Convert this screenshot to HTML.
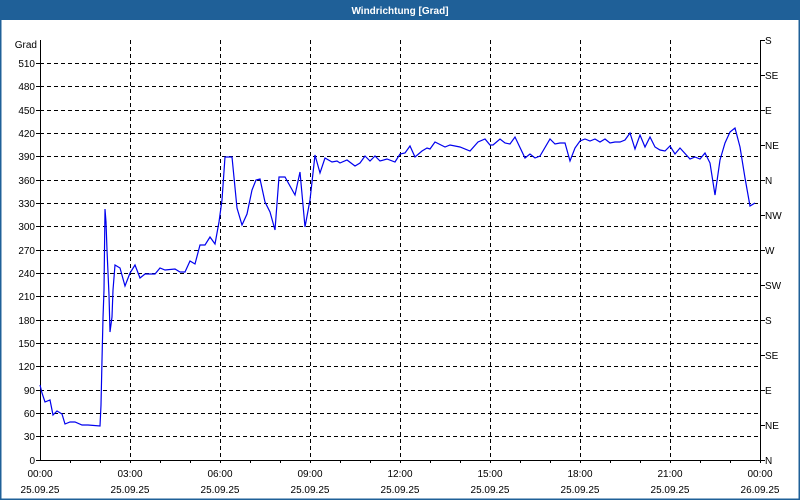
<!DOCTYPE html>
<html><head><meta charset="utf-8"><style>
html,body{margin:0;padding:0;background:#fff;}
svg{display:block;font-family:"Liberation Sans",sans-serif;font-size:10px;}
</style></head><body>
<svg width="800" height="500" xmlns="http://www.w3.org/2000/svg">
<rect x="0" y="0" width="800" height="500" fill="#fff"/>
<rect x="0.5" y="0.5" width="799" height="499" fill="none" stroke="#1f6098" stroke-width="2"/>
<rect x="0" y="0" width="800" height="20" fill="#1f6098"/>
<text x="400" y="14" fill="#fff" font-weight="bold" text-anchor="middle">Windrichtung [Grad]</text>
<g stroke="#000" stroke-width="1" stroke-dasharray="4,3" fill="none">
<path d="M40 63.5H760M40 86.5H760M40 110.5H760M40 133.5H760M40 156.5H760M40 180.5H760M40 203.5H760M40 226.5H760M40 250.5H760M40 273.5H760M40 296.5H760M40 320.5H760M40 343.5H760M40 366.5H760M40 390.5H760M40 413.5H760M40 436.5H760"/>
<path d="M130.5 40V460M220.5 40V460M310.5 40V460M400.5 40V460M490.5 40V460M580.5 40V460M670.5 40V460"/>
</g>
<g stroke="#000" stroke-width="1" fill="none">
<path d="M40.5 40V460.5H760.5V40"/>
<path d="M70.5 460v3M100.5 460v3M130.5 460v3M160.5 460v3M190.5 460v3M220.5 460v3M250.5 460v3M280.5 460v3M310.5 460v3M340.5 460v3M370.5 460v3M400.5 460v3M430.5 460v3M460.5 460v3M490.5 460v3M520.5 460v3M550.5 460v3M580.5 460v3M610.5 460v3M640.5 460v3M670.5 460v3M700.5 460v3M730.5 460v3M760.5 460v3"/>
<path d="M760 40.5h5M760 75.5h5M760 110.5h5M760 145.5h5M760 180.5h5M760 215.5h5M760 250.5h5M760 285.5h5M760 320.5h5M760 355.5h5M760 390.5h5M760 425.5h5M760 460.5h5"/>
<path d="M36 63.5h4M36 86.5h4M36 110.5h4M36 133.5h4M36 156.5h4M36 180.5h4M36 203.5h4M36 226.5h4M36 250.5h4M36 273.5h4M36 296.5h4M36 320.5h4M36 343.5h4M36 366.5h4M36 390.5h4M36 413.5h4M36 436.5h4M36 460.5h4"/>
</g>
<g fill="#000" text-anchor="end">
<text x="37" y="48">Grad</text>
<text x="35" y="67">510</text><text x="35" y="90">480</text><text x="35" y="114">450</text><text x="35" y="137">420</text><text x="35" y="160">390</text><text x="35" y="184">360</text><text x="35" y="207">330</text><text x="35" y="230">300</text><text x="35" y="254">270</text><text x="35" y="277">240</text><text x="35" y="300">210</text><text x="35" y="324">180</text><text x="35" y="347">150</text><text x="35" y="370">120</text><text x="35" y="394">90</text><text x="35" y="417">60</text><text x="35" y="440">30</text><text x="35" y="464">0</text>
</g>
<g fill="#000">
<text x="765" y="44">S</text><text x="765" y="79">SE</text><text x="765" y="114">E</text><text x="765" y="149">NE</text><text x="765" y="184">N</text><text x="765" y="219">NW</text><text x="765" y="254">W</text><text x="765" y="289">SW</text><text x="765" y="324">S</text><text x="765" y="359">SE</text><text x="765" y="394">E</text><text x="765" y="429">NE</text><text x="765" y="464">N</text>
</g>
<g fill="#000" text-anchor="middle">
<text x="40" y="477">00:00</text><text x="130" y="477">03:00</text><text x="220" y="477">06:00</text><text x="310" y="477">09:00</text><text x="400" y="477">12:00</text><text x="490" y="477">15:00</text><text x="580" y="477">18:00</text><text x="670" y="477">21:00</text><text x="760" y="477">00:00</text>
<text x="40" y="493">25.09.25</text><text x="130" y="493">25.09.25</text><text x="220" y="493">25.09.25</text><text x="310" y="493">25.09.25</text><text x="400" y="493">25.09.25</text><text x="490" y="493">25.09.25</text><text x="580" y="493">25.09.25</text><text x="670" y="493">25.09.25</text><text x="760" y="493">26.09.25</text>
</g>
<polyline fill="none" stroke="#0000ee" stroke-width="1.2" points="40,385 42,393 45,402 50,400 53,415 57,411 62,414 65,424 70,422 75,422 82,425 88,425 100,426 101,405 102,360 103,318 104,290 105,209 106,222 107,250 109,295 110,332 112,317 113,290 115,265 120,268 125,286 130,273 135,265 140,278 145,274 155,274 160,268 165,270 175,269 180,272 185,272 190,261 195,264 200,245 205,245 210,237 215,244 219,222 222,200 225,157 232,157 237,208 242,225 247,214 252,190 256,180 260,179 265,202 270,212 275,230 279,177 285,177 295,195 300,172 305,227 310,200 315,155 320,173 325,158 332,162 337,161 340,163 347,160 355,166 360,163 365,156 370,161 375,156 380,161 387,159 395,162 400,154 405,153 410,146 415,157 422,151 427,148 430,149 435,142 445,147 450,145 460,147 470,151 478,142 485,139 490,145 493,145 500,139 505,143 510,144 515,137 525,158 530,154 535,158 540,156 550,139 555,144 560,143 565,143 570,161 575,148 580,141 585,139 590,141 595,139 600,142 605,139 610,143 615,142 620,142 625,140 630,133 635,149 640,135 645,147 650,137 655,147 660,150 665,151 670,146 675,154 680,148 690,159 695,157 700,159 705,153 710,163 715,195 720,160 725,143 730,132 735,128 740,147 745,178 750,206 755,203"/>
</svg>
</body></html>
